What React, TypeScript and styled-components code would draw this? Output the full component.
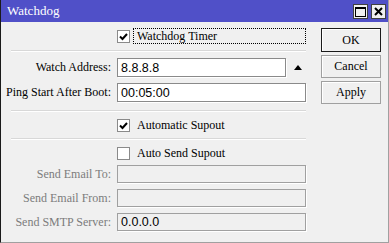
import React, {FC} from 'react';
import styled, {createGlobalStyle} from "styled-components";

const Global = createGlobalStyle`
  html, body {
    margin: 0;
    padding: 0;
    background: #f0f0f0;
  }
`

const serif = `"Liberation Serif", "Times New Roman", serif`
const sans = `"Liberation Sans", Arial, sans-serif`

type RowType = {
    label: string
    value?: string
    disabled?: boolean
    mt: number
    h: number
    arrow?: boolean
}

const FieldRow: FC<RowType> = ({label, value, disabled, mt, h, arrow}) => (
    <StRow $mt={mt}>
        <Label $disabled={disabled}>{label}</Label>
        <Field>
            <Input $disabled={disabled} $h={h}>{value}</Input>
            {arrow && <Arrow viewBox="0 0 8 5"><path d="M0 5 L4 0 L8 5 Z" fill="#000"/></Arrow>}
        </Field>
    </StRow>
)

type CheckType = {
    label: string
    checked?: boolean
    focused?: boolean
    mt: number
}

const CheckRow: FC<CheckType> = ({label, checked, focused, mt}) => (
    <StCheckRow $mt={mt}>
        <Box>
            {checked && <svg width="11" height="11" viewBox="0 0 11 11">
                <path d="M2 5.5 L4.5 8 L9 3" stroke="#000" strokeWidth="2" fill="none"/>
            </svg>}
        </Box>
        <CheckLabel $focused={focused}>{label}</CheckLabel>
    </StCheckRow>
)

export default function App() {
    return (
        <>
            <Global/>
            <Window>
                <TitleBar>
                    <span>Watchdog</span>
                    <TitleButtons>
                        <TitleBtn>
                            <svg width="11" height="10" viewBox="0 0 11 10">
                                <rect x="0.5" y="0.5" width="10" height="9" fill="none" stroke="#000"/>
                                <rect x="0" y="0" width="11" height="2" fill="#000"/>
                            </svg>
                        </TitleBtn>
                        <TitleBtn>
                            <svg width="9" height="9" viewBox="0 0 9 9">
                                <path d="M1 1 L8 8 M8 1 L1 8" stroke="#000" strokeWidth="2"/>
                            </svg>
                        </TitleBtn>
                    </TitleButtons>
                </TitleBar>
                <Body>
                    <Form>
                        <CheckRow label="Watchdog Timer" checked focused mt={6}/>
                        <Separator $mt={6}/>
                        <FieldRow label="Watch Address:" value="8.8.8.8" mt={6} h={19} arrow/>
                        <FieldRow label="Ping Start After Boot:" value="00:05:00" mt={6} h={19}/>
                        <Separator $mt={8}/>
                        <CheckRow label="Automatic Supout" checked mt={5}/>
                        <Separator $mt={5}/>
                        <CheckRow label="Auto Send Supout" mt={5}/>
                        <FieldRow label="Send Email To:" disabled mt={4} h={18}/>
                        <FieldRow label="Send Email From:" disabled mt={6} h={18}/>
                        <FieldRow label="Send SMTP Server:" value="0.0.0.0" disabled mt={6} h={18}/>
                    </Form>
                    <Buttons>
                        <Button $primary>OK</Button>
                        <Button>Cancel</Button>
                        <Button>Apply</Button>
                    </Buttons>
                </Body>
            </Window>
        </>
    );
}

const Window = styled.div`
  width: 389px;
  height: 243px;
  box-sizing: border-box;
  border-left: 1px solid #1a1a1a;
  border-right: 1px solid #a0a0a0;
  border-bottom: 1px solid #a0a0a0;
  background: #f0f0f0;
  display: flex;
  flex-direction: column;
  overflow: hidden;
`

const TitleBar = styled.div`
  height: 22px;
  flex: none;
  margin-left: -1px;
  background: #5050c8;
  color: #fff;
  font-family: ${serif};
  font-size: 13px;
  display: flex;
  align-items: center;
  justify-content: space-between;
  padding: 0 2px 0 7px;
  & span{
    padding-bottom: 1px;
  }
`

const TitleButtons = styled.div`
  display: flex;
  gap: 3px;
  padding-top: 1px;
`

const TitleBtn = styled.div`
  width: 15px;
  height: 15px;
  box-sizing: border-box;
  background: #f0f0f0;
  border: 1px solid #404040;
  display: flex;
  align-items: center;
  justify-content: center;
`

const Body = styled.div`
  display: flex;
  align-items: flex-start;
`

const Form = styled.div`
  width: 305px;
  display: flex;
  flex-direction: column;
`

const StRow = styled.div<{$mt: number}>`
  display: grid;
  grid-template-columns: 110px 1fr;
  column-gap: 6px;
  align-items: center;
  margin-top: ${p => p.$mt}px;
`

const Label = styled.div<{$disabled?: boolean}>`
  text-align: right;
  font-family: ${serif};
  font-size: 12px;
  color: ${p => p.$disabled ? '#7c7c7c' : '#000'};
  white-space: nowrap;
`

const Field = styled.div`
  display: flex;
  align-items: center;
`

const Input = styled.div<{$disabled?: boolean; $h: number}>`
  flex: 1;
  height: ${p => p.$h}px;
  box-sizing: border-box;
  border: 1px solid ${p => p.$disabled ? '#a0a0a0' : '#8a8a8a'};
  box-shadow: 1px 1px 0 #fff;
  background: ${p => p.$disabled ? '#f0f0f0' : '#fff'};
  font-family: ${sans};
  font-size: 12.5px;
  color: #000;
  padding: 0 3px;
  display: flex;
  align-items: center;
`

const Arrow = styled.svg`
  width: 8px;
  height: 5px;
  flex: none;
  margin: 0 4px 0 8px;
`

const StCheckRow = styled.div<{$mt: number}>`
  display: flex;
  align-items: center;
  height: 16px;
  margin-top: ${p => p.$mt}px;
  padding-left: 116px;
`

const Box = styled.div`
  width: 13px;
  height: 13px;
  box-sizing: border-box;
  border: 1px solid #8a8a8a;
  background: #fff;
  display: flex;
  align-items: center;
  justify-content: center;
  flex: none;
`

const CheckLabel = styled.div<{$focused?: boolean}>`
  flex: 1;
  height: 16px;
  box-sizing: border-box;
  margin-left: 3px;
  padding-left: 3px;
  font-family: ${serif};
  font-size: 12px;
  line-height: 14px;
  border: 1px dotted ${p => p.$focused ? '#000' : 'transparent'};
  white-space: nowrap;
`

const Separator = styled.div<{$mt: number}>`
  margin: ${p => p.$mt}px 0 0 10px;
  height: 1px;
  border-top: 1px solid #d8d8d8;
  background: #fff;
`

const Buttons = styled.div`
  display: flex;
  flex-direction: column;
  gap: 3px;
  margin-left: 15px;
  padding-top: 6px;
`

const Button = styled.div<{$primary?: boolean}>`
  width: 60px;
  height: ${p => p.$primary ? 24 : 23}px;
  box-sizing: border-box;
  border: 1px solid ${p => p.$primary ? '#1a1a1a' : '#a0a0a0'};
  box-shadow: inset 1px 1px 0 #fff;
  background: #f0f0f0;
  font-family: ${serif};
  font-size: 12px;
  display: flex;
  align-items: center;
  justify-content: center;
`
